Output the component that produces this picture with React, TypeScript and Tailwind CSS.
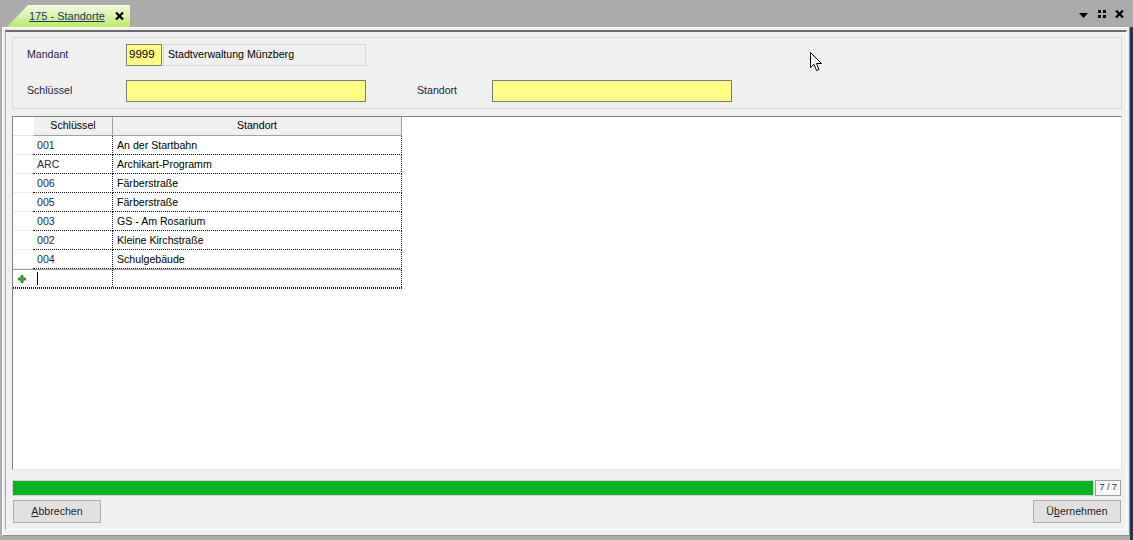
import React from "react";

const rows = [
  { key: "001", name: "An der Startbahn" },
  { key: "ARC", name: "Archikart-Programm" },
  { key: "006", name: "Färberstraße" },
  { key: "005", name: "Färberstraße" },
  { key: "003", name: "GS - Am Rosarium" },
  { key: "002", name: "Kleine Kirchstraße" },
  { key: "004", name: "Schulgebäude" },
];

function CloseX({ size = 9 }: { size?: number }) {
  return (
    <svg width={size} height={size - 1} viewBox="0 0 9 8" className="block">
      <path d="M1 0.5 L8 7.5 M8 0.5 L1 7.5" stroke="#000" strokeWidth="2.2" />
    </svg>
  );
}

function Cursor() {
  return (
    <svg width="13" height="20" viewBox="0 0 13 20" className="absolute left-[810px] top-[52px]">
      <path
        d="M0.5 0.5 L0.5 15.5 L4 12.3 L6.6 18.5 L9 17.5 L6.5 11.5 L11.5 11.5 Z"
        fill="#fff"
        stroke="#000"
        strokeWidth="1"
        strokeLinejoin="miter"
      />
    </svg>
  );
}

function PlusIcon() {
  return (
    <svg width="8" height="8" viewBox="0 0 8 8" className="block">
      <path d="M3 0.5 H5 V3 H7.5 V5 H5 V7.5 H3 V5 H0.5 V3 H3 Z" fill="#3bb33b" stroke="#1d6e1d" strokeWidth="0.8" />
    </svg>
  );
}

export default function App() {
  return (
    <div className="relative h-[540px] w-[1133px] overflow-hidden bg-[#ababab] font-['Liberation_Sans',Arial,sans-serif] text-[10.6px] text-black">
      {/* tab strip */}
      <div className="flex h-[27px] items-end pl-[7px]">
        <div className="flex h-[22px] w-[123px] items-center bg-linear-to-b from-[#f5fbe4] to-[#bde865] pl-[22px] text-[11px] [clip-path:polygon(0_100%,21px_0,100%_0,100%_100%)]">
          <span className="text-[#1b3561] underline">175 - Standorte</span>
          <span className="ml-[10px]">
            <CloseX />
          </span>
        </div>
        <div className="mb-[9px] ml-auto mr-[9px] flex items-center">
          <svg width="9" height="5" viewBox="0 0 9 5" className="mt-[2px] block">
            <path d="M0 0 H9 L4.5 5 Z" fill="#000" />
          </svg>
          <svg width="8" height="8" viewBox="0 0 8 8" className="ml-[10px] block">
            <rect x="0" y="0" width="3" height="3" fill="#000" />
            <rect x="5" y="0" width="3" height="3" fill="#000" />
            <rect x="0" y="5" width="3" height="3" fill="#000" />
            <rect x="5" y="5" width="3" height="3" fill="#000" />
          </svg>
          <span className="ml-[9px]">
            <CloseX />
          </span>
        </div>
      </div>

      <div className="flex">
        {/* window */}
        <div className="ml-[2px] h-[509px] w-[1128px] border border-t-white border-l-white border-r-[#8c8c8c] border-b-[#8c8c8c] bg-[#f0f0f0] p-[2px] pb-[5px]">
          <div className="flex h-full flex-col border border-t-2 border-t-[#6b6b6b] border-l-[#a0a0a0] border-r-white border-b-white pl-[6px] pr-[4px] pt-[5px]">
            {/* filter panel */}
            <div className="h-[72px] border border-[#dadada] pl-[14px] pt-[6px] text-[#1e1e3c]">
              <div className="flex h-[22px] items-center">
                <span className="w-[99px]">Mandant</span>
                <div className="flex h-[22px] w-[36px] items-center border border-[#7a7a7a] bg-[#ffff85] pl-[2px] text-[11.5px] text-black">
                  9999
                </div>
                <div className="ml-[1px] flex h-[22px] w-[203px] items-center border border-[#dadada] bg-[#f0f0f0] pl-[4px] text-black">
                  Stadtverwaltung Münzberg
                </div>
              </div>
              <div className="mt-[14px] flex h-[22px] items-center">
                <span className="w-[99px]">Schlüssel</span>
                <div className="h-[22px] w-[240px] border border-[#7a7a7a] bg-[#ffff85]" />
                <span className="ml-[51px] w-[75px]">Standort</span>
                <div className="h-[22px] w-[240px] border border-[#7a7a7a] bg-[#ffff85]" />
              </div>
            </div>

            {/* grid */}
            <div className="mt-[7px] h-[354px] border border-t-[#828282] border-l-[#828282] border-r-[#e3e3e3] border-b-[#e3e3e3] bg-white">
              <div className="w-[390px]">
                <div className="flex h-[19px]">
                  <div className="w-[20px] border-b border-[#e6e6e6] bg-white" />
                  <div className="flex w-[80px] items-center justify-center border-b border-r border-l border-b-[#a0a0a0] border-r-[#a0a0a0] border-l-white bg-[#f0f0f0]">
                    Schlüssel
                  </div>
                  <div className="flex w-[289px] items-center justify-center border-b border-r border-[#a0a0a0] bg-[#f0f0f0]">
                    Standort
                  </div>
                </div>
                {rows.map((r) => (
                  <div key={r.key} className="flex h-[19px]">
                    <div className="w-[20px] border-b border-[#ededed]" />
                    <div className="flex w-[80px] items-center border-b border-r border-dotted border-[#1a1a1a] pl-[4px] pt-[1px] text-[#1f2a4e]">
                      {r.key}
                    </div>
                    <div className="flex w-[289px] items-center border-b border-r border-dotted border-[#1a1a1a] pl-[4px] pt-[1px]">
                      {r.name}
                    </div>
                  </div>
                ))}
                <div className="h-[1px] w-[389px] bg-[#a0a0a0]" />
                <div className="flex h-[18px] w-[389px] border-b border-dotted border-[#1a1a1a]">
                  <div className="flex w-[20px] items-center pl-[5px]">
                    <PlusIcon />
                  </div>
                  <div className="flex w-[80px] items-center border-r border-dotted border-[#1a1a1a] pl-[4px]">
                    <div className="h-[13px] w-[1px] bg-black" />
                  </div>
                  <div className="w-[289px] border-r border-dotted border-[#1a1a1a]" />
                </div>
                <div className="h-[1px] w-[389px] border-t border-dotted border-[#333]" />
              </div>
            </div>

            {/* progress */}
            <div className="mr-[1px] mt-[10px] flex h-[16px]">
              <div className="flex-1 border border-[#d2d2d2] bg-[#06b025]" />
              <div className="ml-[1px] flex w-[26px] items-center justify-end border border-[#a0a0a0] bg-[#f7f7f7] pr-[3px] text-[9px] text-[#333]">
                7 / 7
              </div>
            </div>

            {/* buttons */}
            <div className="mt-[4px] flex h-[23px] justify-between px-[1px] text-[#1e1e1e]">
              <div className="flex h-[23px] w-[88px] items-center justify-center border border-[#adadad] bg-[#e1e1e1]">
                <span>
                  <span className="underline">A</span>bbrechen
                </span>
              </div>
              <div className="flex h-[23px] w-[88px] items-center justify-center border border-[#adadad] bg-[#e1e1e1]">
                <span>
                  Ü<span className="underline">b</span>ernehmen
                </span>
              </div>
            </div>
          </div>
        </div>
        <div className="h-[513px] flex-1 bg-[#1c3a58]" />
      </div>

      <Cursor />
    </div>
  );
}
